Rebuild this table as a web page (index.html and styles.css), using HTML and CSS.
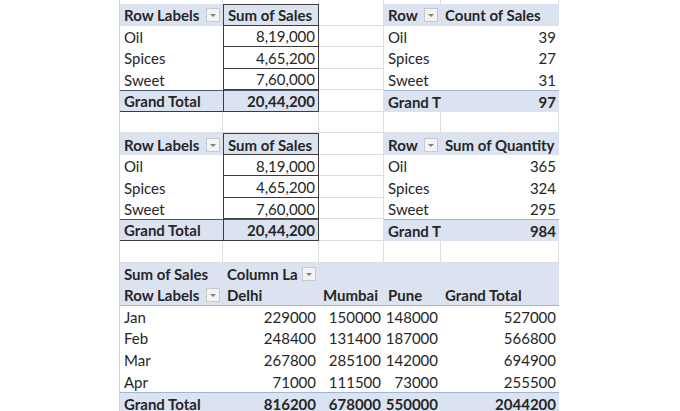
FILE: index.html
```html
<!DOCTYPE html>
<html>
<head>
<meta charset="utf-8">
<link rel="stylesheet" href="styles.css">
</head>
<body>
<div class="sheet">
  <!-- partial top row -->
  <div class="c g top"></div><div class="c g top"></div><div class="c g top"></div><div class="c g top"></div><div class="c g top"></div>

  <!-- table 1 / table 3 -->
  <div class="c hd">Row Labels<span class="dd"></span></div>
  <div class="c hd box boxtop">Sum of Sales</div>
  <div class="c g"></div>
  <div class="c hd">Row<span class="dd"></span></div>
  <div class="c hd">Count of Sales</div>

  <div class="c">Oil</div><div class="c num box">8,19,000</div><div class="c g"></div><div class="c">Oil</div><div class="c num">39</div>
  <div class="c">Spices</div><div class="c num box">4,65,200</div><div class="c g"></div><div class="c">Spices</div><div class="c num">27</div>
  <div class="c">Sweet</div><div class="c num box">7,60,000</div><div class="c g"></div><div class="c">Sweet</div><div class="c num">31</div>

  <div class="c gtl">Grand Total</div><div class="c num gtl box">20,44,200</div><div class="c g"></div><div class="c gtr">Grand T</div><div class="c num gtr">97</div>

  <div class="c g"></div><div class="c g"></div><div class="c g"></div><div class="c g"></div><div class="c g"></div>

  <!-- table 2 / table 4 -->
  <div class="c hd">Row Labels<span class="dd"></span></div>
  <div class="c hd box boxtop">Sum of Sales</div>
  <div class="c g"></div>
  <div class="c hd">Row<span class="dd"></span></div>
  <div class="c hd">Sum of Quantity</div>

  <div class="c">Oil</div><div class="c num box">8,19,000</div><div class="c g"></div><div class="c">Oil</div><div class="c num">365</div>
  <div class="c">Spices</div><div class="c num box">4,65,200</div><div class="c g"></div><div class="c">Spices</div><div class="c num">324</div>
  <div class="c">Sweet</div><div class="c num box">7,60,000</div><div class="c g"></div><div class="c">Sweet</div><div class="c num">295</div>

  <div class="c gtl">Grand Total</div><div class="c num gtl box">20,44,200</div><div class="c g"></div><div class="c gtr">Grand T</div><div class="c num gtr">984</div>

  <div class="c g"></div><div class="c g"></div><div class="c g"></div><div class="c g"></div><div class="c g"></div>

  <!-- bottom cross table -->
  <div class="c hd">Sum of Sales</div>
  <div class="c hd">Column La<span class="dd"></span></div>
  <div class="c hd"></div><div class="c hd"></div><div class="c hd"></div>

  <div class="c hd hl">Row Labels<span class="dd"></span></div>
  <div class="c hd hl">Delhi</div>
  <div class="c hd hl">Mumbai</div>
  <div class="c hd hl">Pune</div>
  <div class="c hd hl">Grand Total</div>

  <div class="c">Jan</div><div class="c num">229000</div><div class="c num">150000</div><div class="c num">148000</div><div class="c num">527000</div>
  <div class="c">Feb</div><div class="c num">248400</div><div class="c num">131400</div><div class="c num">187000</div><div class="c num">566800</div>
  <div class="c">Mar</div><div class="c num">267800</div><div class="c num">285100</div><div class="c num">142000</div><div class="c num">694900</div>
  <div class="c">Apr</div><div class="c num">71000</div><div class="c num">111500</div><div class="c num">73000</div><div class="c num">255500</div>

  <div class="c gtr">Grand Total</div><div class="c num gtr">816200</div><div class="c num gtr">678000</div><div class="c num gtr">550000</div><div class="c num gtr">2044200</div>
</div>
</body>
</html>
```

FILE: styles.css
```css
html, body {
  margin: 0;
  padding: 0;
  background: #ffffff;
}

body {
  font-family: "Lato", "Liberation Sans", sans-serif;
  font-size: 15px;
  color: #262626;
  overflow: hidden;
}

.sheet {
  margin-left: 119px;
  width: 439px;
  display: grid;
  grid-template-columns: 103px 96px 65px 57px 118px;
  grid-template-rows: 4px repeat(19, 21.55px);
  border-left: 1px solid #d0d0d0;
}

.c {
  box-sizing: border-box;
  display: flex;
  align-items: center;
  padding: 1px 4px 0 4px;
  white-space: nowrap;
  overflow: hidden;
  min-width: 0;
}

.num {
  justify-content: flex-end;
  padding-right: 3px;
}

.g {
  border-right: 1px solid #dedede;
  border-bottom: 1px solid #dedede;
}

.top {
  border-bottom: none;
}

.hd {
  background: #dbe3f1;
  font-weight: bold;
}

.hl {
  border-bottom: 1px solid #9fb6d9;
}

.box {
  border-left: 1px solid #3c3c3c;
  border-right: 1px solid #3c3c3c;
  border-bottom: 1px solid #3c3c3c;
}

.boxtop {
  border-top: 1px solid #3c3c3c;
}

.gtl {
  background: #dbe3f1;
  font-weight: bold;
  border-bottom: 1px solid #3c3c3c;
  box-shadow: inset 0 1px 0 #4a5a75;
}

.gtr {
  background: #dbe3f1;
  font-weight: bold;
  border-top: 1px solid #9fb6d9;
}

.dd {
  flex: none;
  box-sizing: border-box;
  width: 14px;
  height: 14px;
  margin-left: auto;
  margin-right: -1px;
  background: #f3f3f3;
  border: 1px solid #c9c9c9;
  position: relative;
}

.dd::after {
  content: "";
  position: absolute;
  left: 3px;
  top: 5px;
  border-left: 3px solid transparent;
  border-right: 3px solid transparent;
  border-top: 3px solid #808080;
}
```
